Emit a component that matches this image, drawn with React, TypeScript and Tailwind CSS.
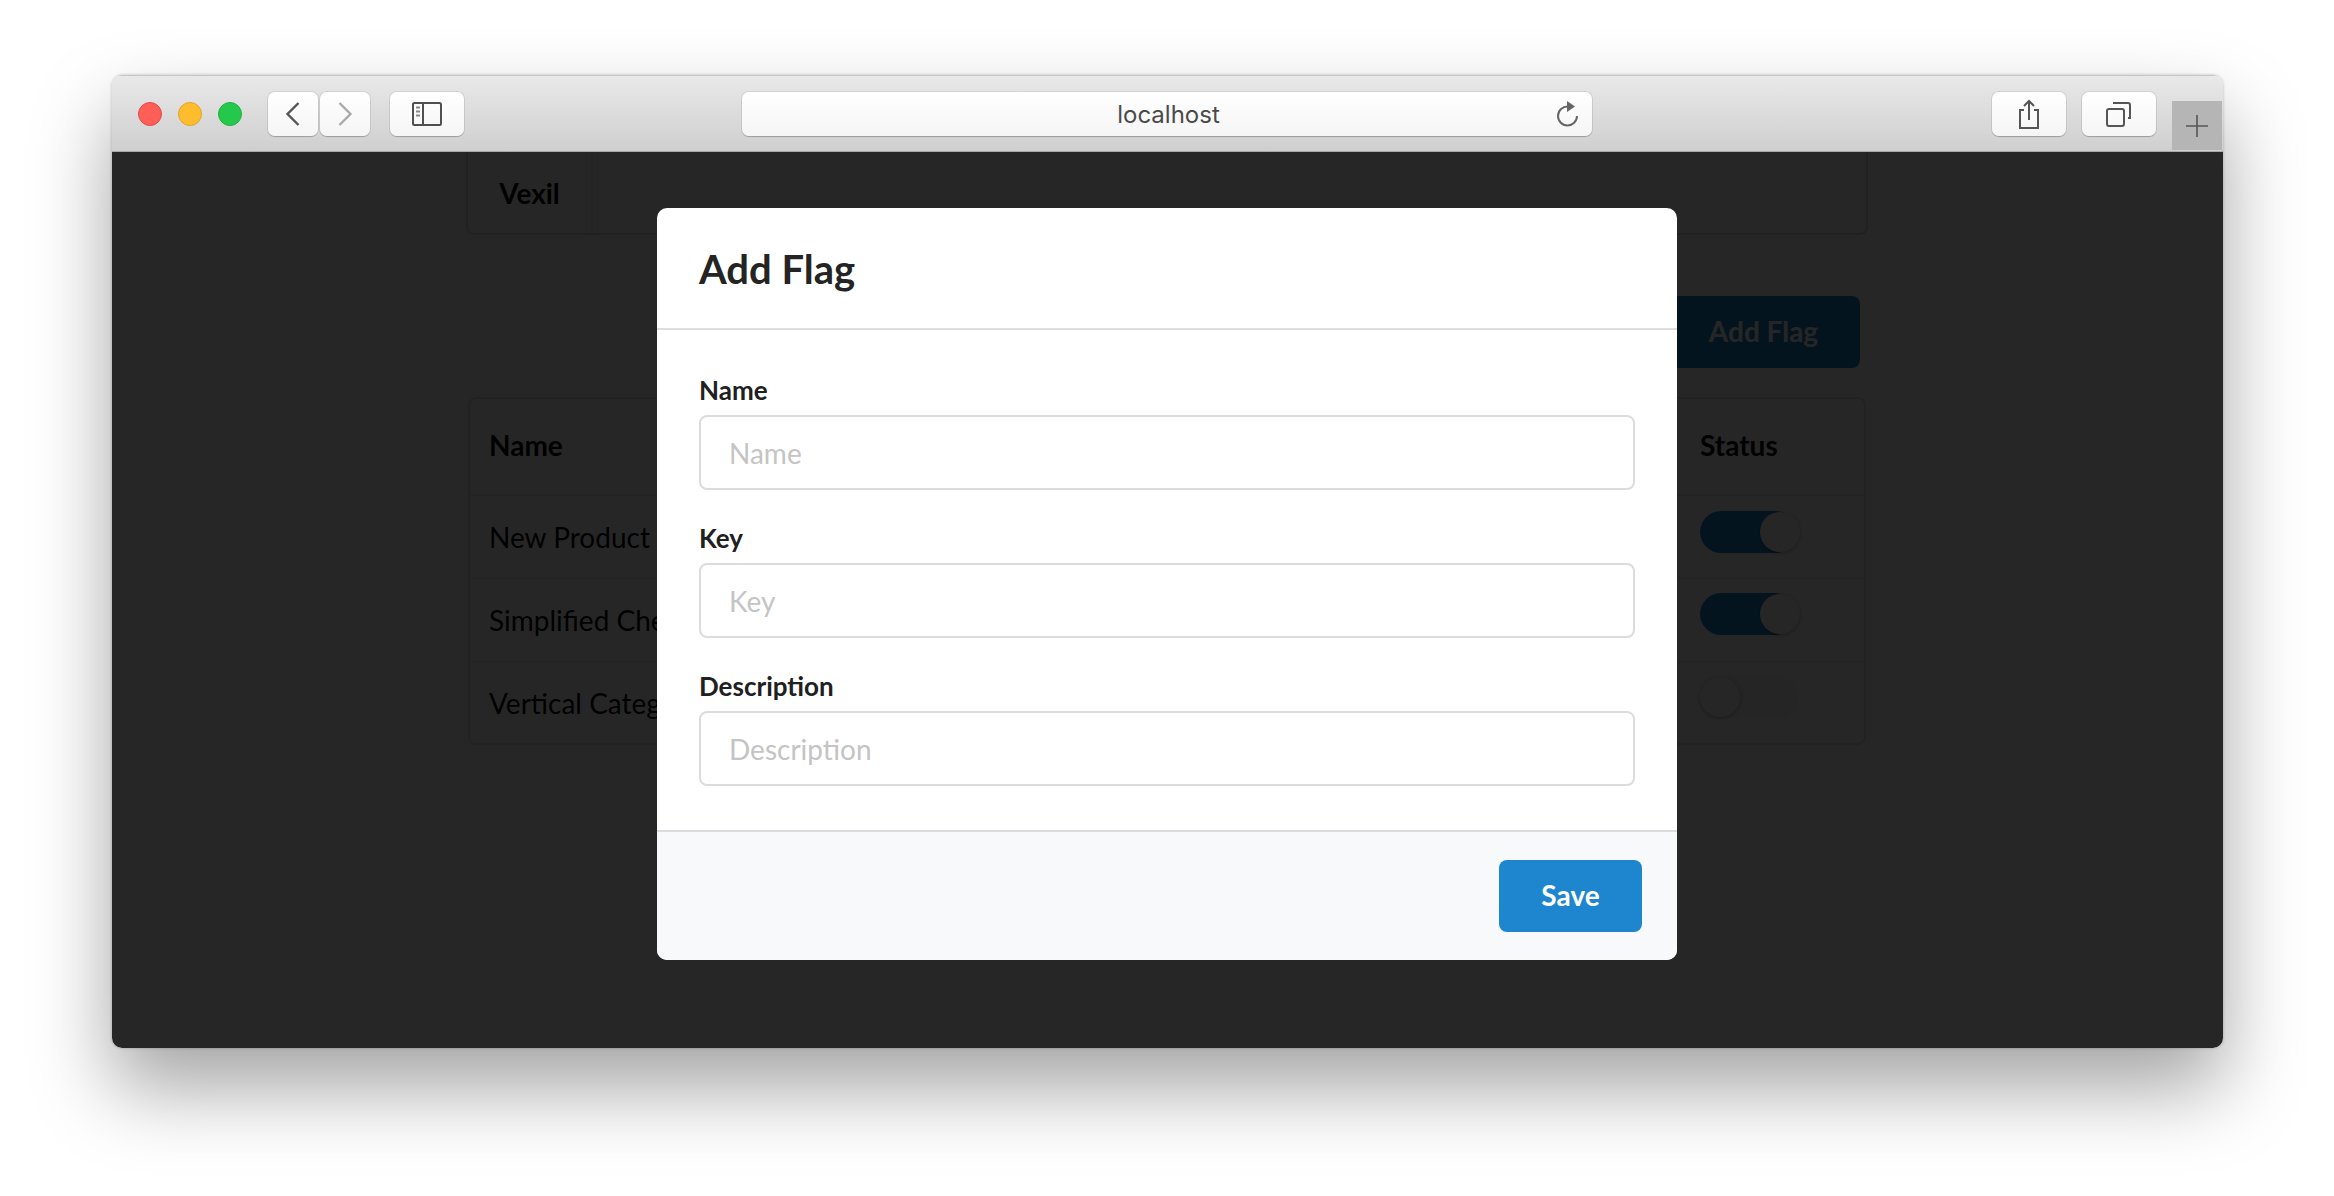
import React from "react";

function Toggle({ on }: { on: boolean }) {
  return on ? (
    <div className="relative h-[42px] w-[96px] rounded-full bg-[#1e86ce]">
      <div className="absolute left-[60px] top-px h-[40px] w-[40px] rounded-full bg-white shadow-[0_1px_4px_rgba(0,0,0,0.3)]" />
    </div>
  ) : (
    <div className="relative h-[42px] w-[98px] rounded-full bg-[#f4f4f4]">
      <div className="absolute left-0 top-px h-[40px] w-[40px] rounded-full bg-white shadow-[0_1px_4px_rgba(0,0,0,0.3)]" />
    </div>
  );
}

function ChromeButton({ className, children }: { className: string; children?: React.ReactNode }) {
  return (
    <div className={`flex h-[44px] items-center justify-center rounded-[7px] bg-gradient-to-b from-white to-[#f5f5f5] shadow-[0_0_0_1px_rgba(0,0,0,0.07),0_1px_1px_rgba(0,0,0,0.2)] ${className}`}>
      {children}
    </div>
  );
}

function Field({ label, className }: { label: string; className?: string }) {
  return (
    <div className={className}>
      <label className="mb-[6px] block h-[38px] text-[26px] font-bold leading-[38px] text-[#202020]">{label}</label>
      <input
        placeholder={label}
        className="block h-[75px] w-full rounded-[8px] border-2 border-[#dcdcdc] bg-white px-[28px] text-[28px] text-[#202020] outline-none placeholder:text-[#c4c4c4]"
      />
    </div>
  );
}

const rows: [string, boolean, string, string][] = [
  ["New Product Page", true, "h-[83px]", "pt-[15px]"],
  ["Simplified Checkout", true, "h-[84px]", "pt-[14px]"],
  ["Vertical Category Nav", false, "h-[82px]", "pt-[13px]"],
];

export default function App() {
  return (
    <div className="h-[1196px] w-[2334px] overflow-hidden bg-white pl-[112px] pt-[75px] font-['Lato',sans-serif]">
      <div className="flex h-[973px] w-[2111px] flex-col overflow-hidden rounded-[10px] shadow-[0_40px_80px_rgba(0,0,0,0.36),0_0_3px_rgba(0,0,0,0.25)]">
        <div className="flex h-[77px] shrink-0 items-start border-b border-b-[#a9a9a9] bg-gradient-to-b from-[#e9e9e9] to-[#cfcfcf] pl-[26px] pt-[17px] shadow-[inset_0_1px_0_#c6c6c6]">
          <div className="mt-[10px] h-[24px] w-[24px] rounded-full border border-[#e5484a] bg-[#ff5f57]" />
          <div className="ml-[16px] mt-[10px] h-[24px] w-[24px] rounded-full border border-[#e0a32a] bg-[#ffbd2e]" />
          <div className="ml-[16px] mt-[10px] h-[24px] w-[24px] rounded-full border border-[#1fb23e] bg-[#24c94b]" />
          <ChromeButton className="ml-[26px] w-[50px]">
            <svg width="16" height="26" viewBox="0 0 16 26" fill="none"><path d="M13.5 2 2.5 13l11 11" stroke="#555" strokeWidth="2.4" /></svg>
          </ChromeButton>
          <ChromeButton className="ml-[2px] w-[50px]">
            <svg width="16" height="26" viewBox="0 0 16 26" fill="none"><path d="M2.5 2l11 11-11 11" stroke="#aaa" strokeWidth="2.4" /></svg>
          </ChromeButton>
          <ChromeButton className="ml-[20px] w-[74px]">
            <svg width="30" height="24" viewBox="0 0 30 24" fill="none">
              <rect x="1" y="1" width="28" height="22" rx="1.5" stroke="#505050" strokeWidth="2" />
              <path d="M11 1v22" stroke="#505050" strokeWidth="2" />
              <path d="M4 5.5h4M4 9.5h4M4 13.5h4" stroke="#888" strokeWidth="2" />
            </svg>
          </ChromeButton>
          <ChromeButton className="relative ml-[278px] w-[850px]">
            <span className="ml-[3px] pt-[2px] font-['Inter',sans-serif] text-[24px] leading-none text-[#4a4a4a]">localhost</span>
            <svg className="absolute right-[13px] top-[8px]" width="24" height="28" viewBox="0 0 24 28" fill="none">
              <path d="M13 6.5a9.5 9.5 0 1 0 9 9.5" stroke="#666" strokeWidth="2" />
              <path d="M12 1l8 5.5-8 5.5z" fill="#666" />
            </svg>
          </ChromeButton>
          <ChromeButton className="ml-[400px] w-[74px]">
            <svg width="24" height="30" viewBox="0 0 24 30" fill="none">
              <path d="M7 11H3v18h18V11h-4" stroke="#555" strokeWidth="2" />
              <path d="M12 21V2M7 7l5-5 5 5" stroke="#555" strokeWidth="2" />
            </svg>
          </ChromeButton>
          <ChromeButton className="ml-[16px] w-[74px]">
            <svg width="26" height="26" viewBox="0 0 26 26" fill="none">
              <rect x="1" y="8" width="17" height="17" rx="2" stroke="#555" strokeWidth="2" />
              <path d="M7 2h15a2 2 0 0 1 2 2v13h-2" stroke="#555" strokeWidth="2" />
            </svg>
          </ChromeButton>
          <div className="ml-[16px] mt-[9px] flex h-[49px] w-[50px] items-center justify-center self-start bg-[#b5b5b5]">
            <svg width="24" height="24" viewBox="0 0 24 24" fill="none"><path d="M12 1v22M1 12h22" stroke="#555" strokeWidth="1.6" /></svg>
          </div>
        </div>

        <div className="relative flex-1 overflow-hidden bg-white pl-[354px] text-[#0a0a0a]">
          <div className="flex h-[83px] w-[1402px] rounded-b-[8px] border-x-2 border-b-2 border-[#dcdcdc]">
            <div className="flex w-[125px] items-center justify-center border-r-2 border-[#e8e8e8] text-[28px] font-bold">Vexil</div>
          </div>
          <div className="flex w-[1402px] justify-end pr-[8px] pt-[61px]">
            <div className="flex h-[72px] w-[193px] items-center justify-center rounded-[8px] bg-[#1e86ce] pb-[2px] text-[28px] font-bold text-white">Add Flag</div>
          </div>
          <div className="ml-[2px] mt-[29px] w-[1398px] rounded-[8px] border-2 border-[#e2e2e2]">
            <div className="flex h-[95px] items-center justify-between pb-[3px] pl-[19px] text-[28px] font-bold">
              <span>Name</span>
              <span className="w-[164px]">Status</span>
            </div>
            {rows.map(([name, on, h, pt]) => (
              <div key={name} className={`flex items-center justify-between border-t-2 border-[#ececec] pl-[19px] text-[28px] ${h}`}>
                <span>{name}</span>
                <div className={`w-[164px] self-start ${pt}`}><Toggle on={on} /></div>
              </div>
            ))}
          </div>

          <div className="absolute inset-0 bg-black/[0.85]" />
          <div className="absolute left-[545px] top-[56px] flex h-[752px] w-[1020px] flex-col overflow-hidden rounded-[10px] bg-white text-[#202020]">
            <div className="flex h-[122px] shrink-0 items-center border-b-2 border-[#dedede] pl-[42px] pt-[2px] text-[40px] font-bold text-[#242424]">Add Flag</div>
            <div className="flex-1 px-[42px] pt-[41px]">
              <Field label="Name" />
              <Field label="Key" className="mt-[29px]" />
              <Field label="Description" className="mt-[29px]" />
            </div>
            <div className="flex h-[130px] shrink-0 items-center justify-end border-t-2 border-[#dcdde0] bg-[#f8f9fb] pr-[35px]">
              <button className="h-[72px] w-[143px] rounded-[8px] bg-[#1e86ce] pb-[2px] text-[28px] font-bold text-white">Save</button>
            </div>
          </div>
        </div>
      </div>
    </div>
  );
}
